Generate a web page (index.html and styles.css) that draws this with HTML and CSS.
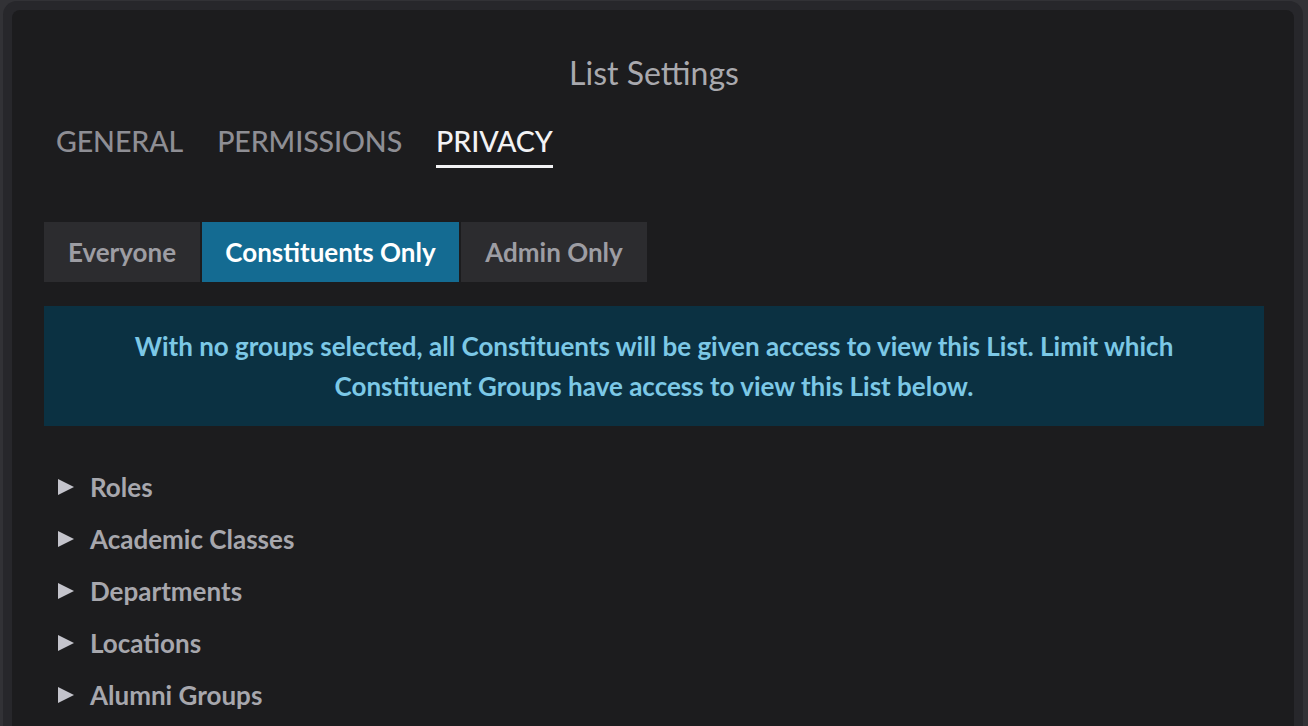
FILE: index.html
```
<!DOCTYPE html>
<html lang="en">
<head>
<meta charset="utf-8">
<title>List Settings</title>
<link rel="stylesheet" href="styles.css">
</head>
<body>
<div class="modal">
  <div class="modal-inner">
    <h1 class="title">List Settings</h1>
    <nav class="tabs">
      <span class="tab">GENERAL</span>
      <span class="tab">PERMISSIONS</span>
      <span class="tab active">PRIVACY</span>
    </nav>
    <div class="segments">
      <span class="seg seg-everyone">Everyone</span>
      <span class="seg seg-const active">Constituents Only</span>
      <span class="seg seg-admin">Admin Only</span>
    </div>
    <div class="info">With no groups selected, all Constituents will be given access to view this List. Limit which<br>Constituent Groups have access to view this List below.</div>
    <ul class="groups">
      <li class="group"><span class="tri"></span>Roles</li>
      <li class="group"><span class="tri"></span>Academic Classes</li>
      <li class="group"><span class="tri"></span>Departments</li>
      <li class="group"><span class="tri"></span>Locations</li>
      <li class="group"><span class="tri"></span>Alumni Groups</li>
    </ul>
  </div>
</div>
</body>
</html>
```
FILE: styles.css
```
html, body {
  margin: 0;
  padding: 0;
  height: 100%;
  overflow: hidden;
}
body {
  background: #323236;
  font-family: Lato, "Noto Sans", sans-serif;
}
.modal {
  margin: 1px 5px 0 3px;
  height: 760px;
  background: #27272b;
  border-radius: 14px;
  padding: 9px 9px 0 9px;
  box-sizing: border-box;
}
.modal-inner {
  background: #1c1c1e;
  border-radius: 8px;
  height: 100%;
  padding: 0 30px 0 32px;
  box-sizing: border-box;
  display: flex;
  flex-direction: column;
}
.title {
  margin: 0;
  padding-top: 47px;
  font-size: 32px;
  line-height: 32px;
  font-weight: 400;
  color: #a9a9ae;
  text-align: center;
}
.tabs {
  display: flex;
  gap: 34px;
  margin-top: 36px;
  padding-left: 12px;
}
.tab {
  font-size: 28.6px;
  line-height: 32px;
  font-weight: 500;
  color: #8e8e94;
  padding-bottom: 8px;
  border-bottom: 3px solid transparent;
  letter-spacing: -0.12px;
}
.tab.active {
  color: #f2f2f4;
  border-bottom-color: #f2f2f4;
}
.segments {
  display: flex;
  gap: 2px;
  margin-top: 54px;
  height: 60px;
}
.seg {
  display: flex;
  align-items: center;
  justify-content: center;
  background: #2c2c2f;
  color: #9d9da3;
  font-size: 26px;
  font-weight: 700;
  box-sizing: border-box;
}
.seg-everyone { width: 156px; }
.seg-const { width: 257px; }
.seg-admin { width: 186px; }
.seg.active {
  background: #146b92;
  color: #ffffff;
}
.info {
  margin-top: 24px;
  background: #0b3142;
  color: #7cc8e6;
  font-size: 26px;
  font-weight: 700;
  line-height: 40px;
  text-align: center;
  padding: 20px 0;
}
.groups {
  list-style: none;
  margin: 45px 0 0 0;
  padding: 0;
  display: flex;
  flex-direction: column;
  gap: 20px;
}
.group {
  display: flex;
  align-items: center;
  height: 32px;
  font-size: 26px;
  font-weight: 700;
  color: #a7a7ad;
  padding-left: 14px;
}
.tri {
  width: 0;
  height: 0;
  border-top: 8.5px solid transparent;
  border-bottom: 8.5px solid transparent;
  border-left: 16px solid #c4c4cc;
  margin-right: 16px;
}
```
